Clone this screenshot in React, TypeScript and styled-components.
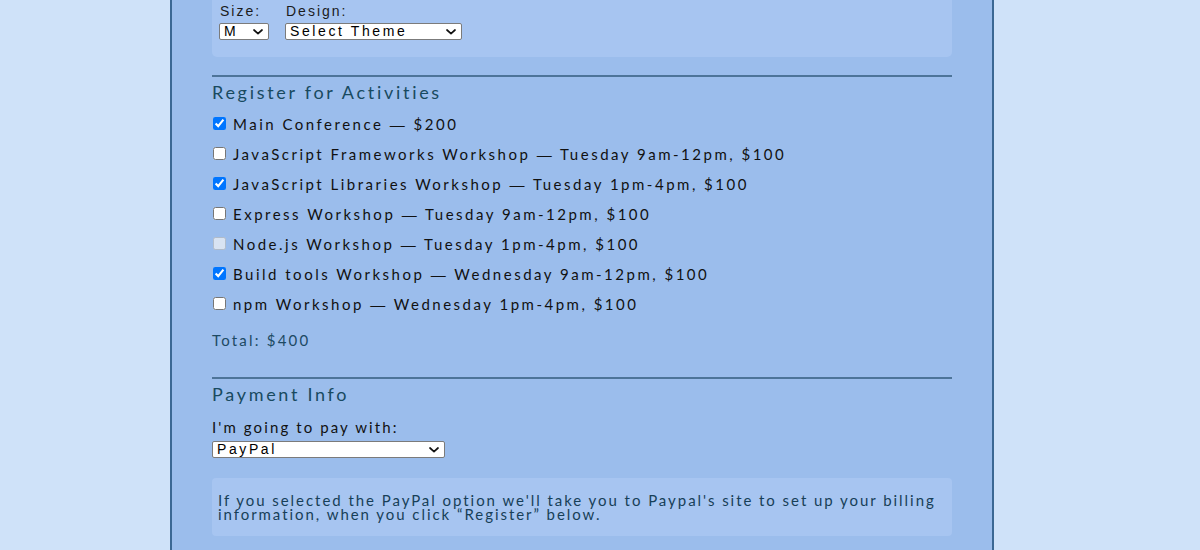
import React from "react";
import styled, { createGlobalStyle } from "styled-components";

const Global = createGlobalStyle`
  html, body { margin: 0; padding: 0; }
  body {
    background: #cfe2f9;
    font-family: Lato, "Noto Sans", sans-serif;
    overflow: hidden;
  }
`;

const Page = styled.div`
  margin-left: 170px;
  height: 550px;
  background: #9bbdec;
  border-left: 2px solid #3b6894;
  border-right: 2px solid #3b6894;
  padding: 0 40px;
  box-sizing: content-box;
  width: 740px;
`;

const Panel = styled.div`
  background: #a7c5f1;
  border-radius: 0 0 5px 5px;
  padding: 3px 7px 17px;
  display: flex;
  gap: 16px;
`;

const Field = styled.div`
  display: flex;
  flex-direction: column;
  gap: 3px;
`;

const SmallLabel = styled.label`
  font-family: "Liberation Sans", Arial, sans-serif;
  font-size: 14px;
  line-height: 17px;
  letter-spacing: 2px;
  color: #1b1b1b;
  padding-left: 1px;
`;

const SelectWrap = styled.div<{ $w: number }>`
  position: relative;
  width: ${(p) => p.$w}px;
  height: 17px;
`;

const NativeSelect = styled.select`
  appearance: none;
  -webkit-appearance: none;
  display: block;
  width: 100%;
  height: 17px;
  font-family: "Liberation Sans", Arial, sans-serif;
  font-size: 14px;
  line-height: 15px;
  letter-spacing: 2.6px;
  background: #fff;
  border: 1px solid #7b7b7b;
  border-radius: 2px;
  padding: 0 0 0 4px;
  color: #000;
  outline: none;
`;

const Chevron = styled.svg`
  position: absolute;
  right: 6px;
  top: 6px;
  width: 10px;
  height: 6px;
  pointer-events: none;
`;

const Rule = styled.hr<{ $top: number }>`
  border: 0;
  height: 2px;
  background: #4d7499;
  margin: ${(p) => p.$top}px 0 0;
`;

const Heading = styled.h2`
  font-family: Lato, sans-serif;
  font-weight: 400;
  font-size: 18px;
  letter-spacing: 2.7px;
  color: #184a60;
  margin: 4px 0 0;
  line-height: 22px;
`;

const List = styled.div`
  display: flex;
  flex-direction: column;
  gap: 13px;
  margin-top: 12px;
`;

const Row = styled.label`
  display: flex;
  align-items: center;
  height: 17px;
  font-size: 15px;
  letter-spacing: 2.5px;
  color: #111;
`;

const RowText = styled.span`
  white-space: nowrap;
`;

const Dash = styled.span`
  font-family: "Liberation Sans", Arial, sans-serif;
`;

const Check = styled.input`
  width: 13px;
  height: 13px;
  margin: 0 7px 0 1px;
`;

const Total = styled.div`
  margin-top: 20px;
  font-size: 15px;
  line-height: 17px;
  letter-spacing: 2.2px;
  color: #1d4a63;
`;

const PayLabel = styled.div`
  margin-top: 14px;
  margin-bottom: 6px;
  font-size: 15px;
  letter-spacing: 2.1px;
  color: #111;
  line-height: 16px;
`;

const Info = styled.div`
  margin-top: 20px;
  background: #a7c5f1;
  border-radius: 4px;
  padding: 15px 6px 15px;
  font-size: 15px;
  letter-spacing: 1.95px;
  line-height: 14px;
  color: #173f58;
`;

const activities = [
  { n: "Main Conference", d: "$200", c: true },
  { n: "JavaScript Frameworks Workshop", d: "Tuesday 9am-12pm, $100", c: false },
  { n: "JavaScript Libraries Workshop", d: "Tuesday 1pm-4pm, $100", c: true },
  { n: "Express Workshop", d: "Tuesday 9am-12pm, $100", c: false },
  { n: "Node.js Workshop", d: "Tuesday 1pm-4pm, $100", c: false, off: true },
  { n: "Build tools Workshop", d: "Wednesday 9am-12pm, $100", c: true },
  { n: "npm Workshop", d: "Wednesday 1pm-4pm, $100", c: false },
];

function Select({ w, value, options }: { w: number; value: string; options: string[] }) {
  return (
    <SelectWrap $w={w}>
      <NativeSelect defaultValue={value}>
        {options.map((o) => (
          <option key={o}>{o}</option>
        ))}
      </NativeSelect>
      <Chevron viewBox="0 0 10 6">
        <path d="M1 1 L5 4.6 L9 1" fill="none" stroke="#111" strokeWidth="1.7" strokeLinecap="round" strokeLinejoin="round" />
      </Chevron>
    </SelectWrap>
  );
}

export default function App() {
  return (
    <>
      <Global />
      <Page>
        <Panel>
          <Field>
            <SmallLabel>Size:</SmallLabel>
            <Select w={50} value="M" options={["S", "M", "L", "XL"]} />
          </Field>
          <Field>
            <SmallLabel>Design:</SmallLabel>
            <Select w={177} value="Select Theme" options={["Select Theme", "Theme - JS Puns", "Theme - I ♥ JS"]} />
          </Field>
        </Panel>
        <Rule $top={18} />
        <Heading>Register for Activities</Heading>
        <List>
          {activities.map((a) => (
            <Row key={a.n}>
              <Check type="checkbox" defaultChecked={a.c} disabled={a.off} />
              <RowText>
                {a.n} <Dash>—</Dash> {a.d}
              </RowText>
            </Row>
          ))}
        </List>
        <Total>Total: $400</Total>
        <Rule $top={28} />
        <Heading>Payment Info</Heading>
        <PayLabel>I'm going to pay with:</PayLabel>
        <Select w={233} value="PayPal" options={["Credit Card", "PayPal", "Bitcoin"]} />
        <Info>
          If you selected the PayPal option we'll take you to Paypal's site to set up your billing
          information, when you click “Register” below.
        </Info>
      </Page>
    </>
  );
}
